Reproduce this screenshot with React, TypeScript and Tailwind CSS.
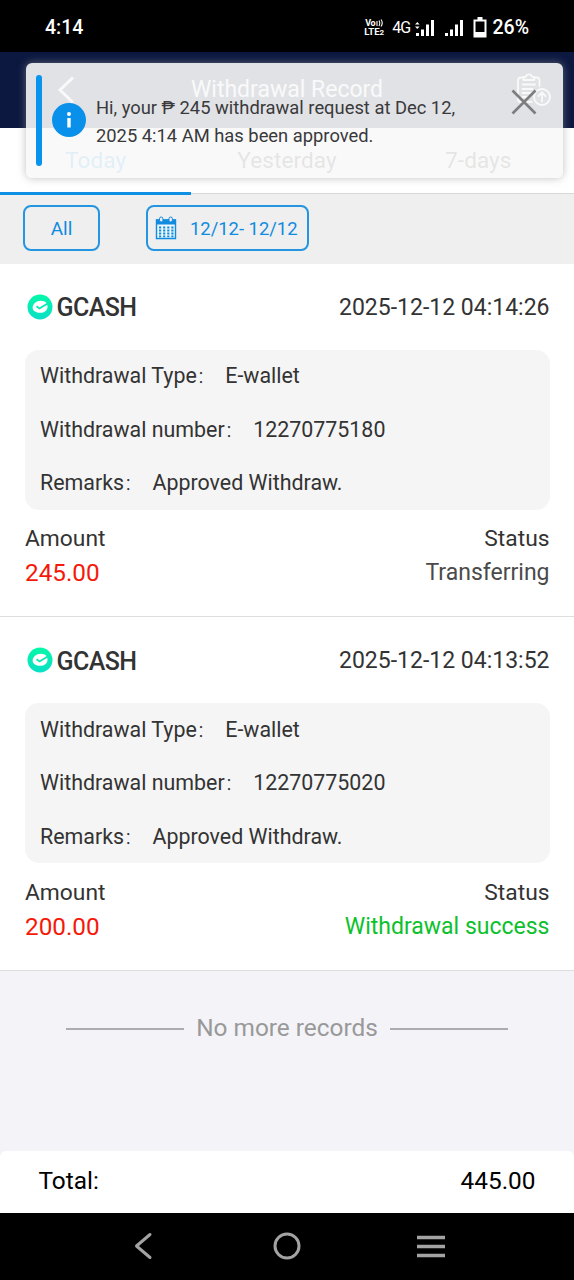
import React from "react";

type RecordItem = {
  time: string;
  number: string;
  amount: string;
  status: string;
  done: boolean;
};

const records: RecordItem[] = [
  { time: "2025-12-12 04:14:26", number: "12270775180", amount: "245.00", status: "Transferring", done: false },
  { time: "2025-12-12 04:13:52", number: "12270775020", amount: "200.00", status: "Withdrawal success", done: true },
];

function StatusBar() {
  return (
    <div className="flex h-[52px] shrink-0 items-center bg-black pl-[45px] pr-[45px] pt-[3px] text-white">
      <span className="text-[19.5px] font-medium leading-6">4:14</span>
      <div className="ml-auto flex items-center">
        <div className="mr-[6px] flex w-[22px] flex-col font-bold">
          <span className="flex h-[8px] items-center pl-px text-[9px] leading-[8px] tracking-[-0.3px]">
            Vo
            <svg className="ml-px" width="8" height="8" viewBox="0 0 8 8" fill="none" stroke="white" strokeWidth="1.1">
              <path d="M1 7V2M3 1.5Q4.500 4 3 7M5 .5Q7.500 4 5 7.500" />
            </svg>
          </span>
          <span className="h-[9px] text-[9.5px] leading-[9px]">LTE<span className="text-[8px]">2</span></span>
        </div>
        <span className="mr-[5px] text-[16px] leading-6 tracking-[-0.8px]">4G</span>
        <svg className="mr-[9px]" width="20" height="18" viewBox="0 0 20 18" fill="white">
          <path d="M0 5.500 2.300 3l2.300 2.500zM0 7.500h4.600L2.300 10zM1 14h3v3H1zM6 10.500h3V17H6zM11 5.500h3V17h-3zM16 1h3v16h-3z" />
        </svg>
        <svg className="mr-[9px]" width="20" height="18" viewBox="0 0 20 18" fill="white">
          <path d="M1 14h3v3H1zM6 10.500h3V17H6zM11 5.500h3V17h-3zM16 1h3v16h-3z" />
        </svg>
        <svg className="mr-[5px]" width="14" height="22" viewBox="0 0 14 22">
          <path d="M4.500 0h5v3h-5z" fill="white" />
          <path d="M1.500 3.500h11v16h-11z" fill="none" stroke="white" strokeWidth="2" />
          <path d="M1 15h12v5H1z" fill="white" />
        </svg>
        <span className="text-[19.5px] font-medium leading-6">26%</span>
      </div>
    </div>
  );
}

function Header() {
  return (
    <div className="flex h-[76px] shrink-0 items-center bg-[#0c1840] pl-[57px] pr-[22px] text-white">
      <svg width="18" height="28" viewBox="0 0 18 28" fill="none" stroke="white" strokeWidth="3">
        <path d="M16 1.500 3 14l13 12.500" />
      </svg>
      <div className="flex-1 pr-[17px] text-center text-[23px] leading-7">Withdrawal Record</div>
      <svg width="36" height="36" viewBox="0 0 36 36" fill="none" stroke="white" strokeWidth="1.8" strokeLinecap="round" strokeLinejoin="round">
        <path d="M7.500 5.500H5a3 3 0 0 0-3 3V27a3 3 0 0 0 3 3h10.500M18 5.500h2.500a3 3 0 0 1 3 3V14" />
        <path d="M7.500 8V4.800h2.300a3.200 3.200 0 0 1 6.200 0h2.300V8zM6.500 12.500h12.500M6.500 17h10M6.500 21h8M6.500 25h7" />
        <circle cx="26" cy="25" r="8" />
        <path d="M26 29.500v-8.500M22.500 24l3.500-3.500 3.500 3.500" />
      </svg>
    </div>
  );
}

function Tabs() {
  return (
    <div className="grid h-[67px] shrink-0 grid-cols-3 bg-[#efefef] text-center text-[22.5px] leading-[62px] tracking-[0.1px] text-[#333]">
      <div className="h-[67px] border-b-[3px] border-[#0f90e4] bg-white pt-[0.5px] text-[#0f98ee]">Today</div>
      <div className="h-[66px] border-b border-[#d8d8d8] bg-white pt-[0.5px]">Yesterday</div>
      <div className="h-[66px] border-b border-[#d8d8d8] bg-white pt-[0.5px]">7-days</div>
    </div>
  );
}

function CalendarIcon() {
  return (
    <svg width="22" height="24" viewBox="0 0 22 24" fill="none">
      <path d="M1.500 4h19v18.500h-19z" fill="#eef7fd" stroke="#108be0" strokeWidth="1.400" />
      <path d="M1 3.500h20V8.500H1z" fill="#108be0" />
      <rect x="4.500" y="1" width="3.400" height="5" rx="1.700" fill="#efefef" stroke="#108be0" />
      <rect x="14" y="1" width="3.400" height="5" rx="1.700" fill="#efefef" stroke="#108be0" />
      <path d="M4 11.500h14.500M4 14.500h14.500M4 17.500h14.500M4 20.300h14.500" stroke="#108be0" strokeWidth="1.800" strokeDasharray="2.200 1.900" />
    </svg>
  );
}

function Filters() {
  return (
    <div className="flex h-[68.6px] shrink-0 gap-[46px] bg-[#efefef] pl-[23px] pt-[10px] text-[18.5px] text-[#108be0]">
      <div className="flex h-[46px] w-[77px] items-center justify-center rounded-[8px] border-2 border-[#2495e0] pt-[3px] text-[19px]">All</div>
      <div className="flex h-[46px] w-[163px] items-center rounded-[8px] border-2 border-[#2495e0] pl-[7px]">
        <CalendarIcon />
        <span className="ml-[13px] mt-[1px] whitespace-nowrap text-[18.4px]">12/12- 12/12</span>
      </div>
    </div>
  );
}

function GcashIcon() {
  return (
    <svg width="26" height="26" viewBox="0 0 26 26" fill="none">
      <defs>
        <linearGradient id="gcash" x1="0" y1="0" x2="0" y2="1">
          <stop offset="0" stopColor="#04f8a8" />
          <stop offset="1" stopColor="#0adfc6" />
        </linearGradient>
      </defs>
      <circle cx="13" cy="13" r="12.500" fill="url(#gcash)" />
      <path d="M19.500 9C17 6 11 6 7.800 9 4.500 12 5 16.500 9 18c4.500 1.800 10.500 1 11.500-4.500.2-1.500-.3-3.300-1-4.500z" fill="white" />
      <path d="m9.500 12.200 3 2.300 9-5.500" stroke="#08eab5" strokeWidth="1.800" />
    </svg>
  );
}

function Field({ label, value }: { label: string; value: string }) {
  return (
    <div className="flex h-[26px] items-center whitespace-pre leading-[26px]">
      <span>{label}</span>
      <span className="w-[21.5px] pt-[2px] text-[17px] font-light">：</span>
      <span className="ml-[7px]">{value}</span>
    </div>
  );
}

function RecordCard({ item }: { item: RecordItem }) {
  return (
    <div className="flex h-[353.5px] shrink-0 flex-col border-b border-[#dedede] bg-white pl-[25px] pr-[24.5px] text-[23px] text-[#333]">
      <div className="flex h-[86.4px] items-center pl-[2px]">
        <GcashIcon />
        <span className="ml-[3.5px] pt-[2px] text-[25px] font-medium tracking-[-0.6px]">GCASH</span>
        <span className="ml-auto pt-[2.4px]">{item.time}</span>
      </div>
      <div className="-mr-[0.5px] flex h-[160px] flex-col gap-[27.5px] rounded-[14px] bg-[#f5f5f5] pl-[15px] pt-[13.1px] text-[21.4px]">
        <Field label="Withdrawal Type" value="E-wallet" />
        <Field label="Withdrawal number" value={item.number} />
        <Field label="Remarks" value="Approved Withdraw." />
      </div>
      <div className="mt-[12.3px] flex h-[34px] items-center justify-between text-[22.8px]">
        <span>Amount</span>
        <span>Status</span>
      </div>
      <div className="flex h-[34px] items-center justify-between">
        <span className="text-[24.3px] text-[#f5190a]">{item.amount}</span>
        <span className={item.done ? "text-[#0cc12c]" : "text-[#4a4a4a]"}>{item.status}</span>
      </div>
    </div>
  );
}

function Toast() {
  return (
    <div className="absolute left-[26px] top-[63px] flex h-[115px] w-[537px] rounded-[6px] bg-[rgba(248,248,248,0.9)] pl-[10px] pt-[12px] shadow-[0_0_8px_rgba(150,150,150,0.6)]">
      <div className="h-[91px] w-[6px] rounded-full bg-[#0894ee]" />
      <svg className="ml-[10px] mt-[28px]" width="34" height="34" viewBox="0 0 34 34">
        <circle cx="17" cy="17" r="17" fill="#0890ea" />
        <circle cx="17" cy="11" r="2" fill="white" />
        <path d="M15.300 15h3.400v9.500h-3.400z" fill="white" />
      </svg>
      <div className="ml-[10px] mt-[19px] whitespace-nowrap text-[18.35px] leading-[28px] text-[#3a3a3c]">
        <div>Hi, your ₱ 245 withdrawal request at Dec 12,</div>
        <div>2025 4:14 AM has been approved.</div>
      </div>
      <svg className="absolute left-[485px] top-[26px]" width="26" height="26" viewBox="0 0 26 26" stroke="#7d7d7f" strokeWidth="2.600">
        <path d="m1.500 1.500 23 23M24.500 1.500l-23 23" />
      </svg>
    </div>
  );
}

function NavBar() {
  return (
    <div className="flex h-[67px] shrink-0 items-center bg-black pb-px pl-[133px]">
      <svg width="20" height="28" viewBox="0 0 20 28" fill="none" stroke="#a3a3a3" strokeWidth="3" strokeLinecap="round" strokeLinejoin="round">
        <path d="M17 2.500 3.500 14 17 25.500" />
      </svg>
      <svg className="ml-[120px]" width="28" height="28" viewBox="0 0 28 28" fill="none" stroke="#a3a3a3" strokeWidth="3">
        <circle cx="14" cy="14" r="12" />
      </svg>
      <svg className="ml-[115px]" width="30" height="28" viewBox="0 0 30 28" stroke="#a3a3a3" strokeWidth="3.600">
        <path d="M1 5.500h28M1 14.500h28M1 23.500h28" />
      </svg>
    </div>
  );
}

export default function App() {
  return (
    <div className="relative flex h-[1280px] w-[574px] flex-col overflow-hidden bg-[#f3f3f8] font-[Roboto,'Noto_Sans_CJK_SC',sans-serif]">
      <StatusBar />
      <Header />
      <Tabs />
      <Filters />
      {records.map((r) => (
        <RecordCard key={r.number} item={r} />
      ))}
      <div className="flex flex-1 items-start justify-center gap-[12px] pt-[41.5px] text-[24.4px] leading-[32px] text-[#999]">
        <div className="mt-[16px] h-[2px] w-[118px] bg-[#acacae]" />
        <span>No more records</span>
        <div className="mt-[16px] h-[2px] w-[118px] bg-[#acacae]" />
      </div>
      <div className="flex h-[62px] shrink-0 items-center justify-between rounded-t-[6px] bg-white px-[38.5px] pb-[2px] text-[24.4px] text-black">
        <span>Total:</span>
        <span>445.00</span>
      </div>
      <NavBar />
      <Toast />
    </div>
  );
}
